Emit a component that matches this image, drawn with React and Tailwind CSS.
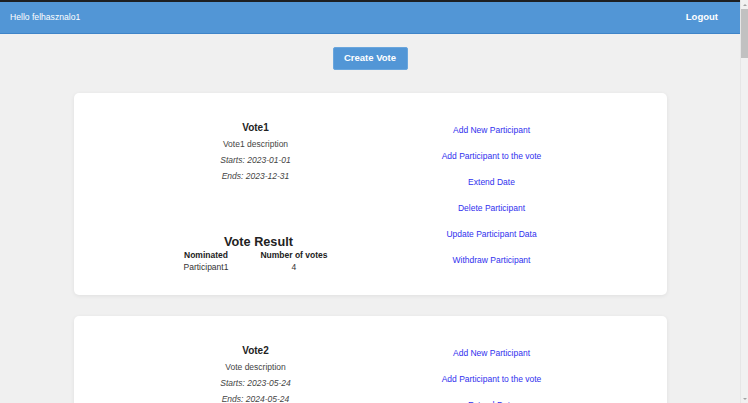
import React from 'react';

const votes = [
  {
    title: 'Vote1',
    description: 'Vote1 description',
    starts: '2023-01-01',
    ends: '2023-12-31',
    results: [{ name: 'Participant1', count: 4 }],
  },
  {
    title: 'Vote2',
    description: 'Vote description',
    starts: '2023-05-24',
    ends: '2024-05-24',
    results: [{ name: 'Participant2', count: 2 }],
  },
];

const actions = [
  'Add New Participant',
  'Add Participant to the vote',
  'Extend Date',
  'Delete Participant',
  'Update Participant Data',
  'Withdraw Participant',
];

const VoteCard = ({ vote }) => (
  <div className="w-[593px] mx-auto bg-white rounded-[5px] shadow-[0_1px_4px_rgba(0,0,0,0.07)] pt-[24px] pb-[22px] pl-[82px] flex gap-[36px] shrink-0">
    <div className="w-[200px] flex flex-col items-center justify-between">
      <div className="flex flex-col items-center mt-[4px]">
        <h3 className="text-[10px] leading-[14px] font-bold text-[#222]">{vote.title}</h3>
        <p className="text-[8.5px] leading-[16px] mt-[1px] text-[#444]">{vote.description}</p>
        <p className="text-[8.5px] leading-[16px] italic text-[#444]">Starts: {vote.starts}</p>
        <p className="text-[8.5px] leading-[16px] italic text-[#444]">Ends: {vote.ends}</p>
      </div>
      <div className="flex flex-col items-center">
        <h2 className="text-[12.7px] leading-[14px] font-bold text-[#222] translate-x-[3px]">Vote Result</h2>
        <div className="grid grid-cols-[auto_auto] gap-x-[32px] text-center text-[8.5px] leading-[12px] text-[#333]">
          <span className="font-bold text-[#222]">Nominated</span>
          <span className="font-bold text-[#222]">Number of votes</span>
          {vote.results.map((r) => (
            <React.Fragment key={r.name}>
              <span>{r.name}</span>
              <span>{r.count}</span>
            </React.Fragment>
          ))}
        </div>
      </div>
    </div>
    <div className="w-[200px] flex flex-col items-center">
      {actions.map((a) => (
        <a key={a} href="#" className="h-[26px] flex items-center text-[8.5px] text-[#3030ee]">
          {a}
        </a>
      ))}
    </div>
  </div>
);

const Scrollbar = () => (
  <div className="w-[8px] h-full bg-[#f1f1f1] flex flex-col border-l border-[#e6e6e6]">
    <div className="h-[9px] flex items-center justify-center">
      <div className="w-0 h-0 border-l-[2px] border-r-[2px] border-b-[2px] border-l-transparent border-r-transparent border-b-[#a3a3a3]" />
    </div>
    <div className="h-[49px] bg-[#c1c1c1]" />
    <div className="flex-1" />
    <div className="h-[9px] flex items-center justify-center">
      <div className="w-0 h-0 border-l-[2px] border-r-[2px] border-t-[2px] border-l-transparent border-r-transparent border-t-[#a3a3a3]" />
    </div>
  </div>
);

export default function App() {
  return (
    <div className="h-[403px] w-[748px] overflow-hidden flex bg-[#f0f0f0] font-['Liberation_Sans',Arial,sans-serif]">
      <div className="w-[740px] h-full flex flex-col overflow-hidden">
        <div className="h-[2px] bg-[#1d1f22] shrink-0" />
        <header className="h-[32px] shrink-0 bg-[#5296d6] border-b border-[#3f84c8] flex items-center justify-between pl-[10px] pr-[22px] text-white">
          <span className="text-[8.6px]">Hello felhasznalo1</span>
          <button className="text-[9.5px] font-bold">Logout</button>
        </header>
        <div className="flex justify-center pt-[13px] shrink-0">
          <button className="w-[75px] h-[23px] bg-[#5296d6] border border-[#6aa6dd] rounded-[2px] text-white text-[9.5px] font-bold">
            Create Vote
          </button>
        </div>
        <div className="flex flex-col gap-[21px] mt-[23px]">
          {votes.map((v) => (
            <VoteCard key={v.title} vote={v} />
          ))}
        </div>
      </div>
      <Scrollbar />
    </div>
  );
}
